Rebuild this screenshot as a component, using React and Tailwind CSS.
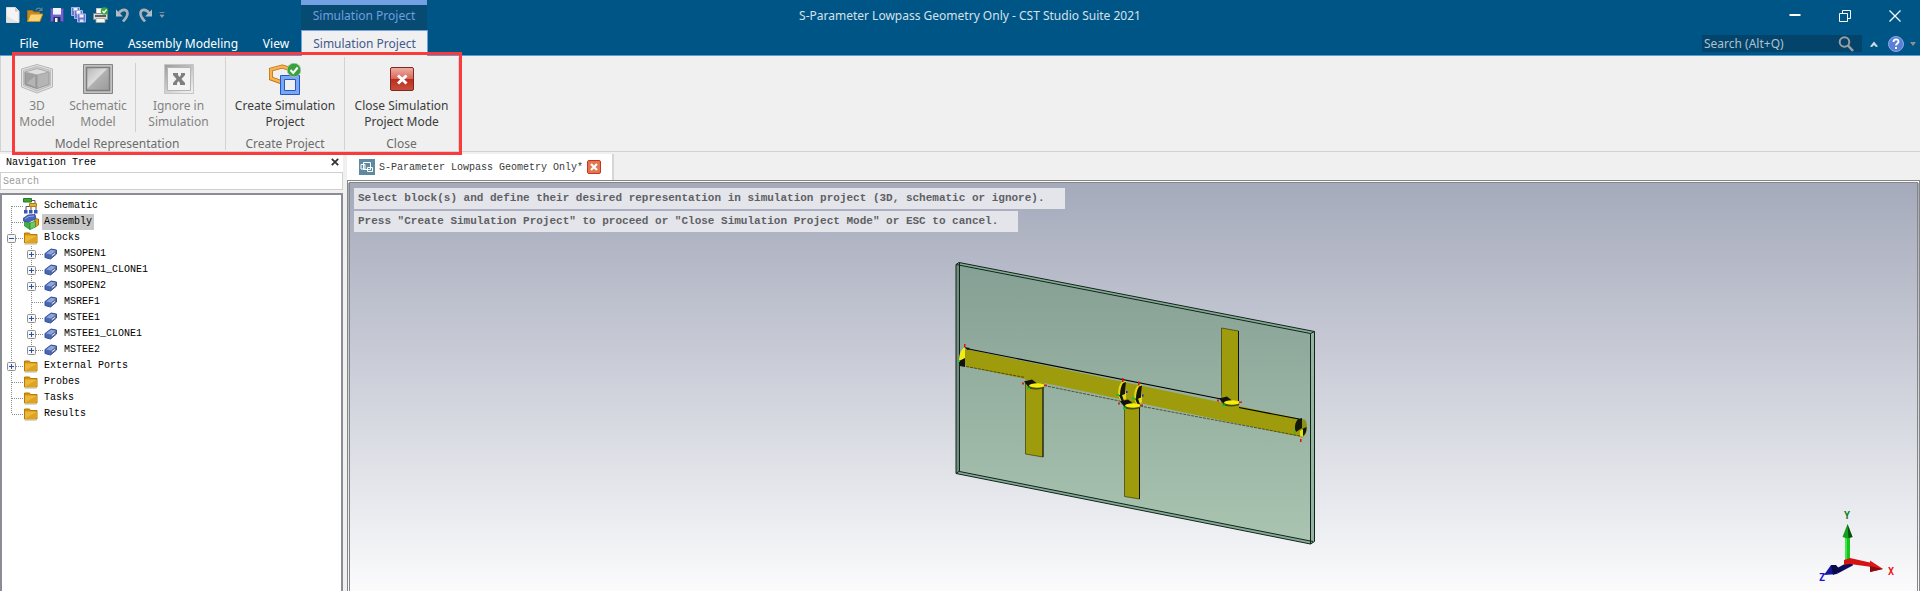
import React from "react";

const ui = "font-['Noto_Sans','Noto_Sans_CJK_SC',sans-serif]";
const mono = "font-['Liberation_Mono','Noto_Sans_CJK_SC',monospace]";

/* ---------- quick access icons ---------- */

function NewIcon() {
  return (
    <svg viewBox="0 0 16 16" className="size-4">
      <path d="M1.500 .5h9l3.500 3.500v11.500H1.500z" fill="#f4f4f4" stroke="#dcdcdc" />
      <path d="M10 .5v4h4z" fill="#c9c9c9" />
      <path d="M2 9l11 6H2z" fill="#e4e4e4" />
    </svg>
  );
}

function OpenIcon() {
  return (
    <svg viewBox="0 0 16 16" className="size-4">
      <path d="M.5 14.500V3.500h5l1 1.500h6v9z" fill="#c88a1e" stroke="#a86f10" />
      <path d="M3.500 7h12.300l-3 7.500H.6z" fill="#f9d479" stroke="#c98c1c" />
      <path d="M9 3c1-2.500 4-2.500 5.500 0M15 .5V3.500h-3" fill="none" stroke="#5f7f9c" strokeWidth="1.200" />
    </svg>
  );
}

function SaveIcon() {
  return (
    <svg viewBox="0 0 16 16" className="size-4">
      <path d="M1.500 1.500h13v13h-13z" fill="#6468cc" stroke="#4547a8" />
      <path d="M4 1h8v6.500H4z" fill="#f4f5fc" />
      <path d="M4 7h8v1H4z" fill="#b9bde6" />
      <path d="M4.500 10h7v5h-7z" fill="#2c2d63" />
      <path d="M6 11h2.500v4H6z" fill="#f2f2f7" />
    </svg>
  );
}

function MiniDisk({ x, y }) {
  return (
    <g transform={`translate(${x} ${y})`}>
      <path d="M.5 .5h8v8h-8z" fill="#6a76cf" stroke="#a9b6ea" />
      <path d="M2.500 1h4v3h-4z" fill="#f4f5fc" />
      <path d="M3 6h3.500v2.500H3z" fill="#dfe3f7" />
    </g>
  );
}

function SaveAllIcon() {
  return (
    <svg viewBox="0 0 16 16" className="size-4">
      <MiniDisk x={0} y={0} />
      <MiniDisk x={3} y={3} />
      <MiniDisk x={6} y={6.5} />
    </svg>
  );
}

function PrintIcon() {
  return (
    <svg viewBox="0 0 16 16" className="size-4">
      <path d="M3.500 7V1.500h7V7" fill="#fff" stroke="#ccc" />
      <path d="M.5 6.500h14v6H.5z" fill="#d9d9d9" stroke="#8a8a8a" />
      <path d="M2 8h11v2H2z" fill="#5d5d5d" />
      <path d="M3 11.500h9v4H3z" fill="#f6f6f2" stroke="#a5a58e" strokeWidth=".8" />
      <circle cx="11.500" cy="4" r="3.800" fill="#35a643" />
      <path d="M9.500 4l1.500 1.700 2.600-3.200" fill="none" stroke="#fff" strokeWidth="1.300" />
    </svg>
  );
}

function UndoIcon({ flip }) {
  return (
    <svg viewBox="0 0 16 16" className={flip ? "size-4 -scale-x-100" : "size-4"}>
      <path d="M4 6C7 1.500 12.500 2 12.500 6.500c0 3.500-2.500 5.500-4.500 8" fill="none" stroke="#a9b1b8" strokeWidth="2.600" />
      <path d="M1 2.500v7h7z" fill="#b4bcc4" />
    </svg>
  );
}

/* ---------- ribbon icons ---------- */

function Model3DIcon() {
  return (
    <svg viewBox="0 0 32 32" className="size-8">
      <path d="M16 1.500l15.500 4.500v18L16 30 .5 24V6z" fill="#e2e2e2" stroke="#b5b5b5" />
      <path d="M16 3.500l13.500 4v15L16 28 2.500 22.500v-15z" fill="#d0d0d0" stroke="#bcbcbc" />
      <path d="M4 9l12 3v13.500L4 21.500z" fill="#a0a0a0" stroke="#8e8e8e" />
      <path d="M28 9l-12 3v13.500l12-4z" fill="#b5b5b5" stroke="#999" />
      <path d="M4 9l12-3.500L28 9l-12 3z" fill="#dedede" stroke="#aaa" />
      <path d="M6 20l8-7v11z" fill="#b4b4b4" />
    </svg>
  );
}

function SchematicModelIcon() {
  return (
    <svg viewBox="0 0 32 32" className="size-8">
      <defs>
        <linearGradient id="sch" x1="0" y1="0" x2="1" y2="1">
          <stop offset="0" stopColor="#b5b5b5" />
          <stop offset=".45" stopColor="#dcdcdc" />
          <stop offset=".5" stopColor="#b0b0b0" />
          <stop offset="1" stopColor="#9a9a9a" />
        </linearGradient>
      </defs>
      <path d="M1.500 1.500h29v29h-29z" fill="#c2c2c2" stroke="#858585" />
      <path d="M4.500 4.500h23v23h-23z" fill="url(#sch)" stroke="#7e7e7e" strokeWidth="1.500" />
    </svg>
  );
}

function IgnoreIcon() {
  return (
    <svg viewBox="0 0 32 32" className="size-8">
      <defs>
        <linearGradient id="ign" x1="0" y1="0" x2=".7" y2="1">
          <stop offset="0" stopColor="#9a9a9a" />
          <stop offset="1" stopColor="#ececec" />
        </linearGradient>
      </defs>
      <path d="M1.500 1.500h29v29h-29z" fill="url(#ign)" stroke="#c6c6c6" />
      <path d="M4.500 4.500h23v23h-23z" fill="#f3f3f3" stroke="#b4b4b4" />
      <path d="M10 10h5v2l1.500 2 1.500-2v-2h4v2l-3.500 4 3.500 4v2h-5v-2l-1.500-2-1.500 2v2h-4v-2l3.500-4-3.500-4z" fill="#7f7f7f" />
    </svg>
  );
}

function CreateProjectIcon() {
  return (
    <svg viewBox="0 0 32 32" className="size-8">
      <path d="M13 3.500l10 3v9l-10 4-11-4V6.500z" fill="none" stroke="#b8741c" strokeWidth="4" />
      <path d="M13 3.500l10 3v9l-10 4-11-4V6.500z" fill="none" stroke="#fbb24a" strokeWidth="2.400" />
      <path d="M11.500 12.500h19v19h-19zM15.500 16.500v11h11v-11z" fill="#7ba6f4" fillRule="evenodd" stroke="#2457c8" />
      <path d="M16 17h10v10H16z" fill="#f0f0f0" />
      <circle cx="25" cy="7" r="6.800" fill="#3aa23c" stroke="#a9c7a6" strokeWidth=".8" />
      <path d="M21.500 7l2.700 3 4.500-5.500" fill="none" stroke="#fff" strokeWidth="2" />
    </svg>
  );
}

function CloseModeIcon() {
  return (
    <svg viewBox="0 0 32 32" className="size-8">
      <defs>
        <linearGradient id="cls" x1="0" y1="0" x2="0" y2="1">
          <stop offset="0" stopColor="#f0b0a6" />
          <stop offset=".48" stopColor="#d9685a" />
          <stop offset=".5" stopColor="#bd2c1c" />
          <stop offset="1" stopColor="#c8503f" />
        </linearGradient>
      </defs>
      <rect x="4.500" y="4.500" width="23" height="23" rx="1.500" fill="url(#cls)" stroke="#7c2a20" />
      <path d="M12 12.500l8.500 8M20.500 12.500l-8.500 8" stroke="#fff" strokeWidth="3" />
    </svg>
  );
}

/* ---------- tree icons ---------- */

function SchematicIcon() {
  return (
    <svg viewBox="0 0 16 16" className="size-4 shrink-0">
      <path d="M8 2.500h4v3M3 12V8.500h5M8 8.500V12M13 9v3" fill="none" stroke="#555" />
      <path d="M.5 .5h8v3.500h-8z" fill="#3fa33c" stroke="#267a26" />
      <path d="M6.500 5.500h7V8.500h-7z" fill="#eeb02c" stroke="#b37a0c" />
      <path d="M1 12h3.500v3.500H1zM6 12h3.500v3.500H6zM11 12h3.500v3.500H11z" fill="#3c55b4" />
    </svg>
  );
}

function AssemblyIcon() {
  return (
    <svg viewBox="0 0 16 16" className="size-4 shrink-0">
      <path d="M11 5h4.500v6L12 13z" fill="#e6a21c" stroke="#b57808" />
      <path d="M1.500 7l5.500 2v6.500l-5.500-3.500z" fill="#3fae45" stroke="#2a8432" strokeWidth=".7" />
      <path d="M7 9l5.500-2v6L7 15.500z" fill="#6cc968" stroke="#2a8432" strokeWidth=".7" />
      <path d="M0 4.500L5 1l7-.5 1 4L6 8 .5 7z" fill="#4965bf" stroke="#2c448f" strokeWidth=".8" />
      <path d="M2 4.500l4-2 5-.5" fill="none" stroke="#92a8e4" />
    </svg>
  );
}

function FolderIcon() {
  return (
    <svg viewBox="0 0 16 16" className="size-4 shrink-0">
      <path d="M1.500 13V3h5l1 1.500h6.500V13z" fill="#d4920f" stroke="#b47a0b" />
      <path d="M2 5.500h11.500v7H2z" fill="#edb83a" />
      <path d="M2 12.500L13.500 6v6.500z" fill="#dda321" />
      <path d="M1.500 14.500h12" stroke="#d8d8d8" />
    </svg>
  );
}

function BlockIcon() {
  return (
    <svg viewBox="0 0 16 16" className="size-4 shrink-0">
      <path d="M2 7.500l6-4.500 5.500 1v4l-6 5-5.500-1.500z" fill="#4a66b8" stroke="#33509c" />
      <path d="M3 7.500l5-3.700 5 1-5 3.700z" fill="#8ea4dc" />
      <path d="M8.500 9l4-3v2l-4 3z" fill="#e6e8ee" stroke="#555e75" strokeWidth=".7" />
    </svg>
  );
}

/* ---------- navigation tree ---------- */

const ICONS = { schematic: SchematicIcon, assembly: AssemblyIcon, folder: FolderIcon, block: BlockIcon };

const TREE = [
  { label: "Schematic", icon: "schematic", first: true },
  { label: "Assembly", icon: "assembly", selected: true },
  { label: "Blocks", icon: "folder", toggle: "-" },
  { label: "MSOPEN1", icon: "block", toggle: "+", child: true },
  { label: "MSOPEN1_CLONE1", icon: "block", toggle: "+", child: true },
  { label: "MSOPEN2", icon: "block", toggle: "+", child: true },
  { label: "MSREF1", icon: "block", child: true },
  { label: "MSTEE1", icon: "block", toggle: "+", child: true },
  { label: "MSTEE1_CLONE1", icon: "block", toggle: "+", child: true },
  { label: "MSTEE2", icon: "block", toggle: "+", child: true, last: true },
  { label: "External Ports", icon: "folder", toggle: "+" },
  { label: "Probes", icon: "folder" },
  { label: "Tasks", icon: "folder" },
  { label: "Results", icon: "folder", last: true },
];

function Branch({ first, last, toggle, through }) {
  return (
    <svg viewBox="0 0 20 16" className="block h-4 w-5 shrink-0">
      <path d={`M8.500 ${first ? 8 : 0}V${last ? 8 : 16}`} stroke="#8c8c8c" strokeDasharray="1 1" />
      {!through && <path d="M9 8.500H20" stroke="#8c8c8c" strokeDasharray="1 1" />}
      {toggle && (
        <g>
          <rect x="4.500" y="4.500" width="8" height="8" rx="1" fill="#f6f6f6" stroke="#8f8f8f" />
          <path d={toggle === "+" ? "M6 8.500h5M8.500 6v5" : "M6 8.500h5"} stroke="#2f4f9f" />
        </g>
      )}
    </svg>
  );
}

function TreeRow({ item }) {
  const Icon = ICONS[item.icon];
  const branch = <Branch first={item.first} last={item.last} toggle={item.toggle} />;
  return (
    <li className="flex h-4 items-center">
      {item.child && <Branch through />}
      {item.toggle ? (
        <button type="button" aria-label={"Toggle " + item.label}>{branch}</button>
      ) : (
        branch
      )}
      <Icon />
      <span className={item.selected ? "ml-[3px] bg-[#c8c8c8] px-0.5 leading-4" : "ml-[3px] px-0.5 leading-4"}>
        {item.label}
      </span>
    </li>
  );
}

function NavigationTree() {
  return (
    <aside className={`flex w-[343px] shrink-0 flex-col bg-[#f0f0f0] text-[10px] text-black ${mono}`}>
      <div className="flex h-[18px] items-center justify-between bg-white pl-1.5 pr-1 pb-0.5">
        <h2>Navigation Tree</h2>
        <button type="button" aria-label="Close navigation tree">
          <svg viewBox="0 0 8 8" className="size-2">
            <path d="M.8 .8l6.400 6.400M7.200 .8L.8 7.200" stroke="#333" strokeWidth="1.800" />
          </svg>
        </button>
      </div>
      <input
        aria-label="Search"
        placeholder="Search"
        className="h-[18px] border border-[#d0d0d0] bg-white px-0.5 pt-px outline-none placeholder:text-[#9a9a9a]"
      />
      <ul className="mt-[3px] flex-1 border-2 border-b-0 border-[#8b8d94] bg-white pt-[3px] pl-px">
        {TREE.map((item) => (
          <TreeRow key={item.label} item={item} />
        ))}
      </ul>
    </aside>
  );
}

/* ---------- header ---------- */

const QUICK = [
  ["New", <NewIcon />],
  ["Open", <OpenIcon />],
  ["Save", <SaveIcon />],
  ["Save all", <SaveAllIcon />],
  ["Print", <PrintIcon />],
  ["Undo", <UndoIcon />],
  ["Redo", <UndoIcon flip />],
];

function TitleBar() {
  return (
    <div className="grid h-[30px] grid-cols-[1fr_auto_1fr]">
      <div className="flex">
        <div className="flex w-[301px] items-center gap-1.5 pb-0.5 pl-[5px]">
          {QUICK.map(([name, icon]) => (
            <button key={name} type="button" aria-label={name}>{icon}</button>
          ))}
          <button type="button" aria-label="Customize toolbar">
            <svg viewBox="0 0 6 6" className="size-1.5">
              <path d="M.5 .5h5M1 3h4L3 5.500z" stroke="#8f9aa5" fill="#8f9aa5" strokeWidth=".8" />
            </svg>
          </button>
        </div>
        <div className="w-[126px] border-t-[5px] border-[#72a1e3] bg-[#074b73] text-center leading-[22px] text-[#6f9fdf]">
          Simulation Project
        </div>
      </div>
      <h1 className="pl-5 leading-8 text-[#d5e1ea]">
        S-Parameter Lowpass Geometry Only - CST Studio Suite 2021
      </h1>
      <div className="flex justify-end text-white">
        <button type="button" aria-label="Minimize" className="grid w-[50px] place-items-center">
          <svg viewBox="0 0 12 12" className="size-3"><path d="M.5 5h11" stroke="#fff" strokeWidth="2" /></svg>
        </button>
        <button type="button" aria-label="Restore" className="grid w-[50px] place-items-center">
          <svg viewBox="0 0 12 12" className="size-3" fill="none" stroke="#fff">
            <path d="M.5 3.500h8v8h-8zM3.500 3V.5h8v8H9" />
          </svg>
        </button>
        <button type="button" aria-label="Close" className="grid w-[50px] place-items-center">
          <svg viewBox="0 0 12 12" className="size-3"><path d="M.5 .5l11 11M11.500 .5l-11 11" stroke="#fff" strokeWidth="1.200" /></svg>
        </button>
      </div>
    </div>
  );
}

function TabBar() {
  return (
    <div className="flex h-[26px] justify-between border-b border-[#5d9bd8]">
      <nav className="flex text-center leading-7 text-white">
        <a href="#file" className="w-[58px]">File</a>
        <a href="#home" className="w-[57px]">Home</a>
        <a href="#assembly" className="w-[136px]">Assembly Modeling</a>
        <a href="#view" className="w-[50px]">View</a>
        <a href="#simulation" className="-mb-px w-[127px] border border-b-0 border-[#72a1e3] bg-[#f0f0f0] leading-[26px] text-[#44598c]">
          Simulation Project
        </a>
      </nav>
      <div className="flex items-center pt-0.5 pr-1">
        <div className="flex h-[17px] w-40 items-center bg-[#04436a] pr-2">
          <input
            aria-label="Search commands"
            placeholder="Search (Alt+Q)"
            className="w-full min-w-0 flex-1 bg-transparent pl-0.5 outline-none placeholder:text-[#a9c3d3]"
          />
          <svg viewBox="0 0 16 16" className="size-4 shrink-0" fill="none" stroke="#9a9fa3">
            <circle cx="6.500" cy="6" r="4.800" strokeWidth="2" />
            <path d="M10 9.500l5 5.500" strokeWidth="2.600" />
          </svg>
        </div>
        <button type="button" aria-label="Collapse ribbon" className="ml-2">
          <svg viewBox="0 0 8 6" className="h-1.5 w-2"><path d="M0 5.500L4 .5l4 5-2 .5-2-2-2 2z" fill="#d5dbe0" /></svg>
        </button>
        <button type="button" aria-label="Help" className="ml-2.5">
          <svg viewBox="0 0 16 16" className="size-4">
            <circle cx="8" cy="8" r="7.500" fill="#5a80d6" stroke="#8aa9ea" />
            <path d="M5.500 6c0-3.500 5-3.500 5-.5 0 2-2.500 2-2.500 4" fill="none" stroke="#fff" strokeWidth="1.800" />
            <path d="M7 11h2v2H7z" fill="#fff" />
          </svg>
        </button>
        <button type="button" aria-label="Help options" className="ml-1.5">
          <svg viewBox="0 0 6 4" className="h-1 w-1.5"><path d="M0 0h6L3 4z" fill="#8f8f8f" /></svg>
        </button>
      </div>
    </div>
  );
}

/* ---------- ribbon ---------- */

function RibbonButton({ icon, lines, disabled, className }) {
  return (
    <button
      type="button"
      disabled={disabled}
      className={`flex flex-col items-center leading-4 ${disabled ? "text-[#838383]" : "text-[#3c3c3c]"} ${className}`}
    >
      <span className="mb-[3px]">{icon}</span>
      <span>{lines[0]}</span>
      <span>{lines[1]}</span>
    </button>
  );
}

function RibbonGroup({ label, children, className }) {
  return (
    <section className={`flex flex-col border-r border-[#d2d2d2] ${className}`}>
      <div className="flex flex-1 pt-1.5">{children}</div>
      <h3 className="text-center leading-3 text-[#6c6c6c]">{label}</h3>
    </section>
  );
}

function Ribbon() {
  return (
    <div className="relative flex h-24 border-b border-l border-[#d2d2d2] bg-[#f0f0f0] pt-px pb-px">
      <RibbonGroup label="Model Representation" className="w-[225px] pr-1 pl-3">
        <div className="flex flex-1">
          <RibbonButton disabled icon={<Model3DIcon />} lines={["3D", "Model"]} className="w-12" />
          <RibbonButton disabled icon={<SchematicModelIcon />} lines={["Schematic", "Model"]} className="w-[74px]" />
          <div className="mb-1.5 w-px bg-[#cfcfcf]" />
          <RibbonButton disabled icon={<IgnoreIcon />} lines={["Ignore in", "Simulation"]} className="flex-1" />
        </div>
      </RibbonGroup>
      <RibbonGroup label="Create Project" className="w-[119px]">
        <RibbonButton icon={<CreateProjectIcon />} lines={["Create Simulation", "Project"]} className="flex-1" />
      </RibbonGroup>
      <RibbonGroup label="Close" className="w-[114px]">
        <RibbonButton icon={<CloseModeIcon />} lines={["Close Simulation", "Project Mode"]} className="flex-1" />
      </RibbonGroup>
      <div className="pointer-events-none absolute -top-1 left-[11px] z-10 h-[103px] w-[450px] border-[3px] border-[#fb3b3b]" />
    </div>
  );
}

/* ---------- 3D view ---------- */

function Port({ x, y }) {
  return (
    <g transform={`translate(${x} ${y})`}>
      <path d="M-12-4l8-2 5 4-8 4z" fill="#111" />
      <ellipse cx="0" cy="1.500" rx="8.500" ry="2.500" fill="#4b4a06" />
      <ellipse cx="1" cy="0" rx="8" ry="2.200" fill="#f4ee12" />
      <path d="M-9 2h3v2h-3z" fill="#12c83a" />
      <path d="M-14-3h2v2h-2zM8-1h3v1.500H8z" fill="#c22" />
    </g>
  );
}

function Disc({ x, y }) {
  return (
    <g transform={`translate(${x} ${y})`}>
      <path d="M0-11c-6 4-6 16-2 20l5-2V-11z" fill="#e2dc14" />
      <path d="M0-9c-2 3-3 7-3 13l5-2 1-12zM-4 3l3 7 2-1-2-6z" fill="#141407" />
      <path d="M-1-14h1.500v4H-1z" fill="#d11" />
      <path d="M-7 2h3v2h-3z" fill="#12c83a" />
      <path d="M3-1h1.500v2H3z" fill="#22c" />
    </g>
  );
}

function BoardModel() {
  return (
    <svg viewBox="0 0 390 300" className="h-[300px] w-[390px] shrink-0">
      <defs>
        <linearGradient id="board" x1="0" y1="0" x2="0" y2="1">
          <stop offset="0" stopColor="#85a094" />
          <stop offset="1" stopColor="#aac4b1" />
        </linearGradient>
      </defs>
      <path d="M16 13.500l3-2L374.500 80.500V290.500l-4 2.500L16 222.500z" fill="#83ab95" />
      <path d="M20 14.500L370.500 82.500V290L20 220.500z" fill="url(#board)" />
      <path d="M16 14v208l4-1.500V14.500z" fill="#6f8f80" />
      <path d="M370.500 82.500l4-2V290.500l-4 2z" fill="#93b5a1" />
      <g fill="none" stroke="#13231b" strokeWidth="1">
        <path d="M16 13.500l3-2L374.500 80.500V290.500l-4 2.500L16 222.500z" />
        <path d="M16 13.500L370.500 82.500V293M370.500 82.500l4-2M19.500 12v208.500L373 290.500M16 222.500l3.500-2.500" />
      </g>
      <g fill="#9e9b0c" stroke="#3a3905" strokeWidth=".7">
        <path d="M85.500 130h17.500v76l-17.500-3z" />
        <path d="M184.500 150h15v98l-15-2.500z" />
        <path d="M281.500 77l17 3v78l-17-4z" />
        <path d="M26 98L363 168.500v18L26 115.500z" stroke="none" />
        <path d="M85.500 126h18v10l-18-5z" stroke="none" />
        <path d="M281.500 144h17v12l-17-3z" stroke="none" />
      </g>
      <path d="M26 97.500L281 148M299 156.500l60 11.500" stroke="#000" strokeWidth="1.100" />
      <path d="M26 115.500l59 11M104 134.500l78 16M200 155l160 30" stroke="#2c2b05" strokeWidth=".7" strokeDasharray="3 1" />
      <path d="M103 135v71M199.500 155v93M298.500 80v70" stroke="#111" strokeWidth="1" />
      <path d="M25 96c-5 3-6 9-6 14l6 5V99z" fill="#f1ec15" />
      <path d="M25 99l2-.4v17l-2-1z" fill="#9e9b0c" />
      <path d="M19 110l6-3v9l-5-1zM24 96l6 1-2 2z" fill="#111" />
      <path d="M24 93h1.500v3H24z" fill="#d11" />
      <path d="M18 109h2v2h-2z" fill="#12c83a" />
      <Disc x={183} y={141} />
      <Disc x={199} y={144.500} />
      <Port x={96} y={134.500} />
      <Port x={192} y={154.500} />
      <Port x={291} y={151.500} />
      <path d="M362 168c5 0 5 5 5 9s-2 9-6 10z" fill="#8c951a" />
      <path d="M358 168l4-1v10l-6 4c-2-5-1-9 2-13zM362 178l4.500-2c0 5-1 7-3.500 9z" fill="#14180c" />
      <path d="M360 180l3-2v8l-3-1z" fill="#e5e01a" />
      <path d="M360 188h1.500v3H360z" fill="#d11" />
      <path d="M354 180h2v2h-2z" fill="#12c83a" />
    </svg>
  );
}

function AxisTriad() {
  return (
    <svg viewBox="0 0 84 76" className="h-[76px] w-[84px]" role="img" aria-label="Axes">
      <path d="M35 53L20 61" stroke="#0b0b5e" strokeWidth="5" />
      <path d="M7 65l7-10 7 9z" fill="#14149e" />
      <path d="M14 55l5 0 5 6-8 4z" fill="#090945" />
      <path d="M28 23.500h5V52h-5z" fill="#17c41f" />
      <path d="M28 23.500h2V52h-2z" fill="#41e848" />
      <path d="M30.500 14l5 13-5 1.500-5-1.500z" fill="#15a01b" />
      <path d="M30.500 14l5 13-4 1z" fill="#0b4f10" />
      <path d="M27 50l6-2 22 5v4l-22-3-6 1z" fill="#d51212" />
      <path d="M53 50.500L66 59l-13 3z" fill="#e01616" />
      <path d="M53 56l13 3-13 3z" fill="#8a0b0b" />
      <g className="font-['DejaVu_Sans_Mono',monospace] text-[10px] font-bold">
        <text x="27" y="9" fill="#0b7d1a">Y</text>
        <text x="71" y="65" fill="#ee1111">X</text>
        <text x="2" y="71" fill="#1414dd">Z</text>
      </g>
    </svg>
  );
}

function Viewport() {
  return (
    <main className="ml-1 flex min-w-0 flex-1 flex-col">
      <div className={`flex h-[26px] w-[267px] items-center gap-1 border-r-2 border-[#d6d6d6] bg-white pl-3 text-[10px] text-[#3a3a3a] ${mono}`}>
        <svg viewBox="0 0 16 16" className="size-4 shrink-0">
          <path d="M0 0h16v16H0z" fill="#5e8aa0" />
          <path d="M4.500 3.500h7v7h-7zM2 5.500h4v4.500H2zM8.500 8.500h5v4h-5z" fill="none" stroke="#fff" />
        </svg>
        <span className="whitespace-nowrap">S-Parameter Lowpass Geometry Only*</span>
        <button type="button" aria-label="Close tab">
          <svg viewBox="0 0 14 14" className="size-3.5">
            <rect x=".5" y=".5" width="13" height="13" rx="1.500" fill="#e2764f" stroke="#c9341e" />
            <path d="M4 4l6 6M10 4l-6 6" stroke="#fff" strokeWidth="2.200" />
          </svg>
        </button>
      </div>
      <div className="relative flex-1 border-[3px] border-b-0 border-double border-[#868686] bg-linear-to-b from-[#a5aabb] to-[#fbfbfc]">
        <div className="absolute inset-0 flex justify-center overflow-hidden pt-[68px] pl-0.5">
          <BoardModel />
        </div>
        <div className={`relative flex flex-col items-start gap-0.5 pt-[5px] pl-1 text-[11px] font-bold text-[#5f6064] ${mono}`}>
          <p className="bg-[#e3e5ea] pr-5 pl-1 leading-[21px]">
            Select block(s) and define their desired representation in simulation project (3D, schematic or ignore).
          </p>
          <p className="bg-[#e3e5ea] pr-5 pl-1 leading-[21px]">
            Press "Create Simulation Project" to proceed or "Close Simulation Project Mode" or ESC to cancel.
          </p>
        </div>
        <div className="absolute right-4 bottom-[5px]">
          <AxisTriad />
        </div>
      </div>
    </main>
  );
}

export default function App() {
  return (
    <div className={`flex min-h-screen flex-col bg-[#f0f0f0] text-[12px] ${ui}`}>
      <header className="bg-[#005587]">
        <TitleBar />
        <TabBar />
      </header>
      <Ribbon />
      <div className="flex flex-1 pt-0.5">
        <NavigationTree />
        <Viewport />
      </div>
    </div>
  );
}
